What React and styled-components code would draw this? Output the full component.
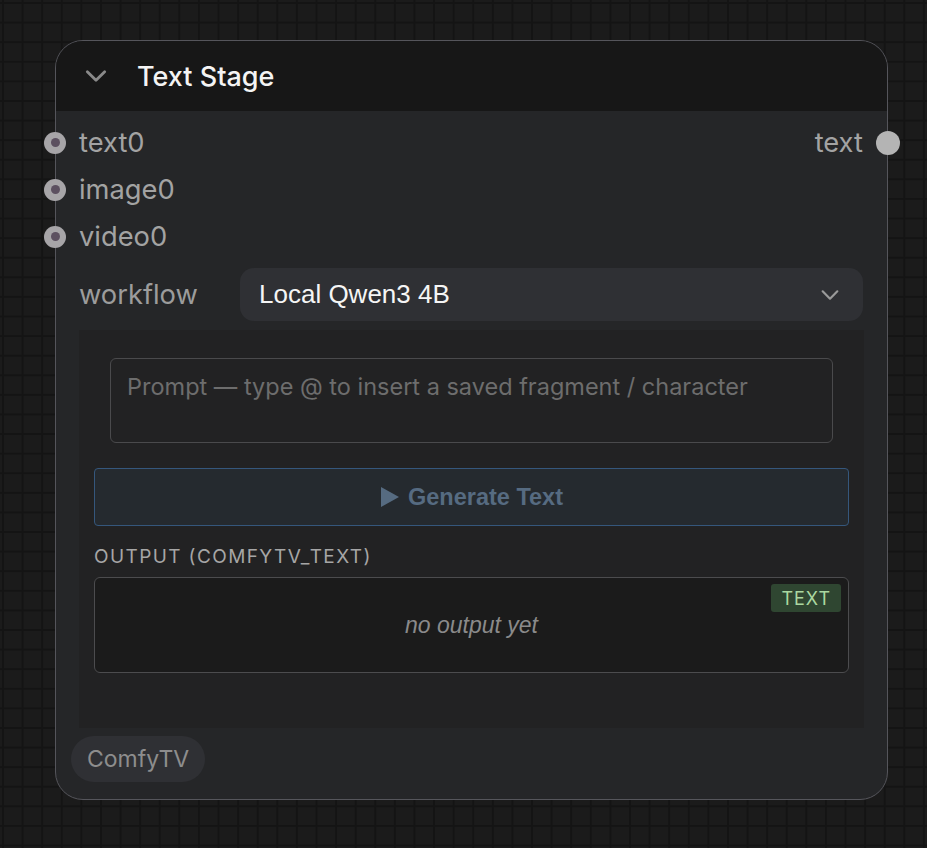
import styled, { createGlobalStyle } from "styled-components";

const GlobalStyle = createGlobalStyle`
  html, body {
    margin: 0;
    padding: 0;
  }
  body {
    height: 848px;
    overflow: hidden;
    font-family: Inter, "Noto Sans", sans-serif;
    background-color: #1b1b1b;
    background-image:
      linear-gradient(to right, #141414 2px, transparent 2px),
      linear-gradient(to bottom, #141414 2px, transparent 2px);
    background-size: 19.6px 19.6px;
    background-position: 2px 2px;
  }
`;

const Canvas = styled.div`
  padding: 40px 0 0 55px;
`;

const Node = styled.section`
  width: 833px;
  height: 760px;
  box-sizing: border-box;
  border: 1px solid #55555b;
  border-radius: 28px;
  background: #252628;
  display: flex;
  flex-direction: column;
  position: relative;
`;

const NodeHeader = styled.header`
  height: 70px;
  flex-shrink: 0;
  display: flex;
  align-items: center;
  gap: 28px;
  padding-left: 27px;
  background: #171717;
  border-radius: 27px 27px 0 0;
`;

const NodeTitle = styled.h1`
  margin: 0;
  font-size: 27px;
  font-weight: 500;
  color: #f4f4f4;
`;

const NodeBody = styled.div`
  flex: 1;
  display: flex;
  flex-direction: column;
  padding: 8px 24px 0 23px;
`;

const SlotRow = styled.div`
  height: 47px;
  display: flex;
  align-items: center;
  justify-content: space-between;
`;

const Slot = styled.div`
  position: relative;
  display: flex;
  align-items: center;
  font-size: 27.3px;
  color: #a3a3a3;
`;

const InputDot = styled.span`
  position: absolute;
  left: -35px;
  top: 50%;
  width: 22px;
  height: 22px;
  margin-top: -11px;
  border-radius: 50%;
  background: #a7a5a8;
  display: flex;
  align-items: center;
  justify-content: center;
  &::after {
    content: "";
    width: 9px;
    height: 9px;
    border-radius: 50%;
    background: #5c5060;
  }
`;

const OutputDot = styled.span`
  position: absolute;
  right: -37px;
  top: 50%;
  width: 24px;
  height: 24px;
  margin-top: -12px;
  border-radius: 50%;
  background: #b4b4b4;
`;

const WidgetRow = styled.div`
  margin-top: 8px;
  display: flex;
  align-items: center;
`;

const WidgetLabel = styled.span`
  width: 161px;
  flex-shrink: 0;
  font-size: 27.3px;
  color: #9c9c9c;
`;

const Select = styled.div`
  flex: 1;
  height: 53px;
  border-radius: 14px;
  background: #2f3034;
  display: flex;
  align-items: center;
  justify-content: space-between;
  padding: 0 22px 0 19px;
  font-family: "Liberation Sans", Arial, sans-serif;
  font-size: 26px;
  color: #f5f5f5;
`;

const Panel = styled.div`
  margin-top: 9px;
  margin-right: -1px;
  background: #222223;
  padding: 28px 15px 55px;
  display: flex;
  flex-direction: column;
`;

const PromptBox = styled.div`
  margin: 0 16px;
  height: 85px;
  box-sizing: border-box;
  border: 1px solid #4a4a4c;
  border-radius: 6px;
  padding: 13px 16px;
  font-size: 23.5px;
  color: #6d6d6d;
`;

const GenerateButton = styled.button`
  margin-top: 25px;
  height: 58px;
  border: 1px solid #35577c;
  border-radius: 4px;
  background: #252a2f;
  color: #566b81;
  font-family: "Liberation Sans", Arial, sans-serif;
  font-weight: 700;
  font-size: 23.5px;
  display: flex;
  align-items: center;
  justify-content: center;
  gap: 8px;
  padding: 0;
`;

const SectionLabel = styled.div`
  margin-top: 20px;
  font-size: 19px;
  letter-spacing: 1.4px;
  color: #a6a6a6;
  line-height: 21px;
`;

const OutputBox = styled.div`
  position: relative;
  margin-top: 10px;
  height: 96px;
  box-sizing: border-box;
  border: 1px solid #4c4c4e;
  border-radius: 6px;
  background: #1b1b1b;
  display: flex;
  align-items: center;
  justify-content: center;
  font-family: "Liberation Sans", Arial, sans-serif;
  font-style: italic;
  font-size: 23px;
  color: #8a8a8a;
`;

const TypeBadge = styled.span`
  position: absolute;
  top: 6px;
  right: 7px;
  height: 28px;
  padding: 0 10px;
  border-radius: 3px;
  background: #2f4631;
  color: #aad8a0;
  font-family: Inter, sans-serif;
  font-style: normal;
  font-size: 18px;
  letter-spacing: 1px;
  display: flex;
  align-items: center;
`;

const NodeFooter = styled.footer`
  padding: 8px 0 0;
  margin-left: -8px;
`;

const SourcePill = styled.span`
  display: inline-flex;
  align-items: center;
  height: 46px;
  padding: 0 16px;
  border-radius: 23px;
  background: #2f3034;
  font-size: 23px;
  color: #8d8d8d;
`;

const Chevron = ({ size = 22, color = "#8a8a8a", width = 2.6 }) => (
  <svg width={size} height={size} viewBox="0 0 24 24" fill="none">
    <path
      d="M4 8l8 8 8-8"
      stroke={color}
      strokeWidth={width}
      strokeLinecap="round"
      strokeLinejoin="round"
    />
  </svg>
);

const PlayIcon = () => (
  <svg width="20" height="22" viewBox="0 0 20 22">
    <path d="M1 1 L19 11 L1 21 Z" fill="#566b81" />
  </svg>
);

const inputs = ["text0", "image0", "video0"];

export default function App() {
  return (
    <>
      <GlobalStyle />
      <Canvas>
        <Node>
          <NodeHeader>
            <Chevron size={26} />
            <NodeTitle>Text Stage</NodeTitle>
          </NodeHeader>
          <NodeBody>
            {inputs.map((name, i) => (
              <SlotRow key={name}>
                <Slot>
                  <InputDot />
                  {name}
                </Slot>
                {i === 0 && (
                  <Slot>
                    text
                    <OutputDot />
                  </Slot>
                )}
              </SlotRow>
            ))}
            <WidgetRow>
              <WidgetLabel>workflow</WidgetLabel>
              <Select>
                Local Qwen3 4B
                <Chevron size={22} color="#9a9a9a" width={2.4} />
              </Select>
            </WidgetRow>
            <Panel>
              <PromptBox>
                Prompt — type @ to insert a saved fragment / character
              </PromptBox>
              <GenerateButton>
                <PlayIcon />
                Generate Text
              </GenerateButton>
              <SectionLabel>OUTPUT (COMFYTV_TEXT)</SectionLabel>
              <OutputBox>
                no output yet
                <TypeBadge>TEXT</TypeBadge>
              </OutputBox>
            </Panel>
            <NodeFooter>
              <SourcePill>ComfyTV</SourcePill>
            </NodeFooter>
          </NodeBody>
        </Node>
      </Canvas>
    </>
  );
}
